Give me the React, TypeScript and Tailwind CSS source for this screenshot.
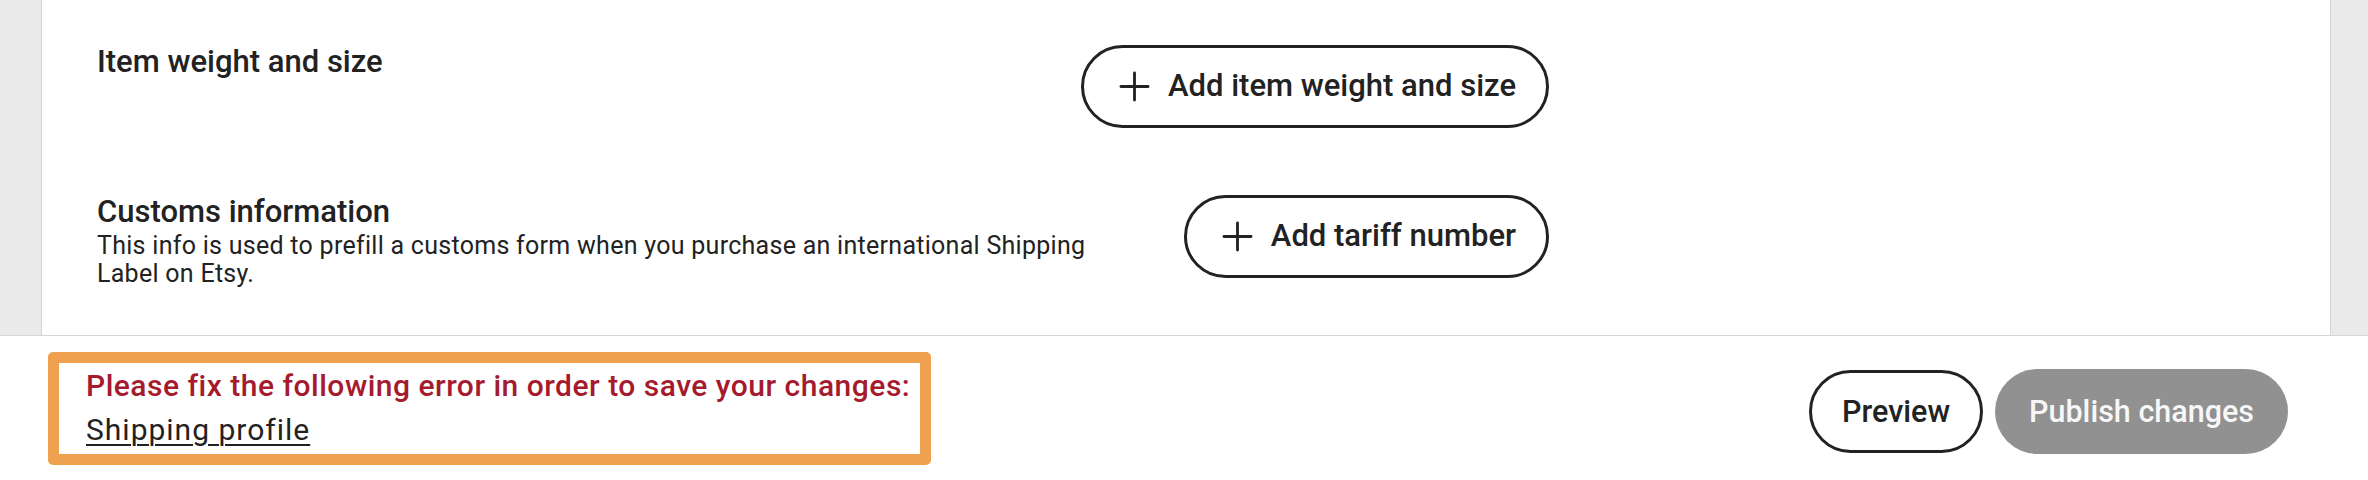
function PlusIcon() {
    return (
        <svg viewBox="0 0 24 24" className="w-[31px] h-[31px] shrink-0" fill="none" stroke="currentColor" strokeWidth={2.2} strokeLinecap="round">
            <path d="M12 1.5v21M1.5 12h21" />
        </svg>
    );
}

function AddButton({ label }: { label: string }) {
    return (
        <button className="mt-[3px] h-[83px] inline-flex items-center gap-[18px] pl-[35px] pr-[30px] rounded-full border-[3px] border-[#222] bg-white text-[31px] font-medium text-[#222] whitespace-nowrap">
            <PlusIcon />
            <span>{label}</span>
        </button>
    );
}

export default function App() {
    return (
        <div className="w-[2368px] h-[480px] bg-white text-[#222] font-[family-name:Roboto,sans-serif] overflow-hidden">
            <div className="flex h-[336px] border-b border-[#d6d6d6]">
                <div className="w-[42px] shrink-0 bg-[#eaeaea] border-r border-[#d4d4d4]" />

                <div className="flex-1 pl-[55px] pt-[42px]">
                    <div className="w-[1452px] flex flex-col gap-[64px]">
                        {/* Item weight */}
                        <div className="flex items-start justify-between">
                            <h3 className="text-[31px] leading-[40px] font-medium">Item weight and size</h3>
                            <AddButton label="Add item weight and size" />
                        </div>

                        {/* Customs */}
                        <div className="flex items-start justify-between">
                            <div className="w-[1010px]">
                                <h3 className="text-[31px] leading-[40px] font-medium">Customs information</h3>
                                <p className="text-[25px] leading-[28px] tracking-[0.28px] font-normal">
                                    This info is used to prefill a customs form when you purchase an international Shipping Label on Etsy.
                                </p>
                            </div>
                            <AddButton label="Add tariff number" />
                        </div>
                    </div>
                </div>

                <div className="w-[38px] shrink-0 bg-[#eaeaea] border-l border-[#d4d4d4]" />
            </div>

            <footer className="h-[144px] flex items-center justify-between pl-[48px] pr-[80px]">
                <div className="w-[883px] h-[113px] rounded-[5px] border-[11px] border-[#f0a150] bg-white pl-[27px] pt-[5px]">
                    <p className="text-[30px] leading-[36px] tracking-[0.5px] font-medium text-[#a61a2e] whitespace-nowrap">
                        Please fix the following error in order to save your changes:
                    </p>
                    <a href="#" className="block mt-[8px] text-[30px] leading-[36px] tracking-[1px] underline decoration-2 underline-offset-[4px] text-[#222]">
                        Shipping profile
                    </a>
                </div>

                <div className="flex items-center gap-[12px] mt-[7px]">
                    <button className="h-[83px] px-[30px] rounded-full border-[3px] border-[#222] bg-white text-[30.5px] font-medium text-[#222]">
                        Preview
                    </button>
                    <button className="h-[85px] px-[34px] rounded-full bg-[#919191] text-[30.5px] font-medium text-[#f7f7f7]">
                        Publish changes
                    </button>
                </div>
            </footer>
        </div>
    );
}
